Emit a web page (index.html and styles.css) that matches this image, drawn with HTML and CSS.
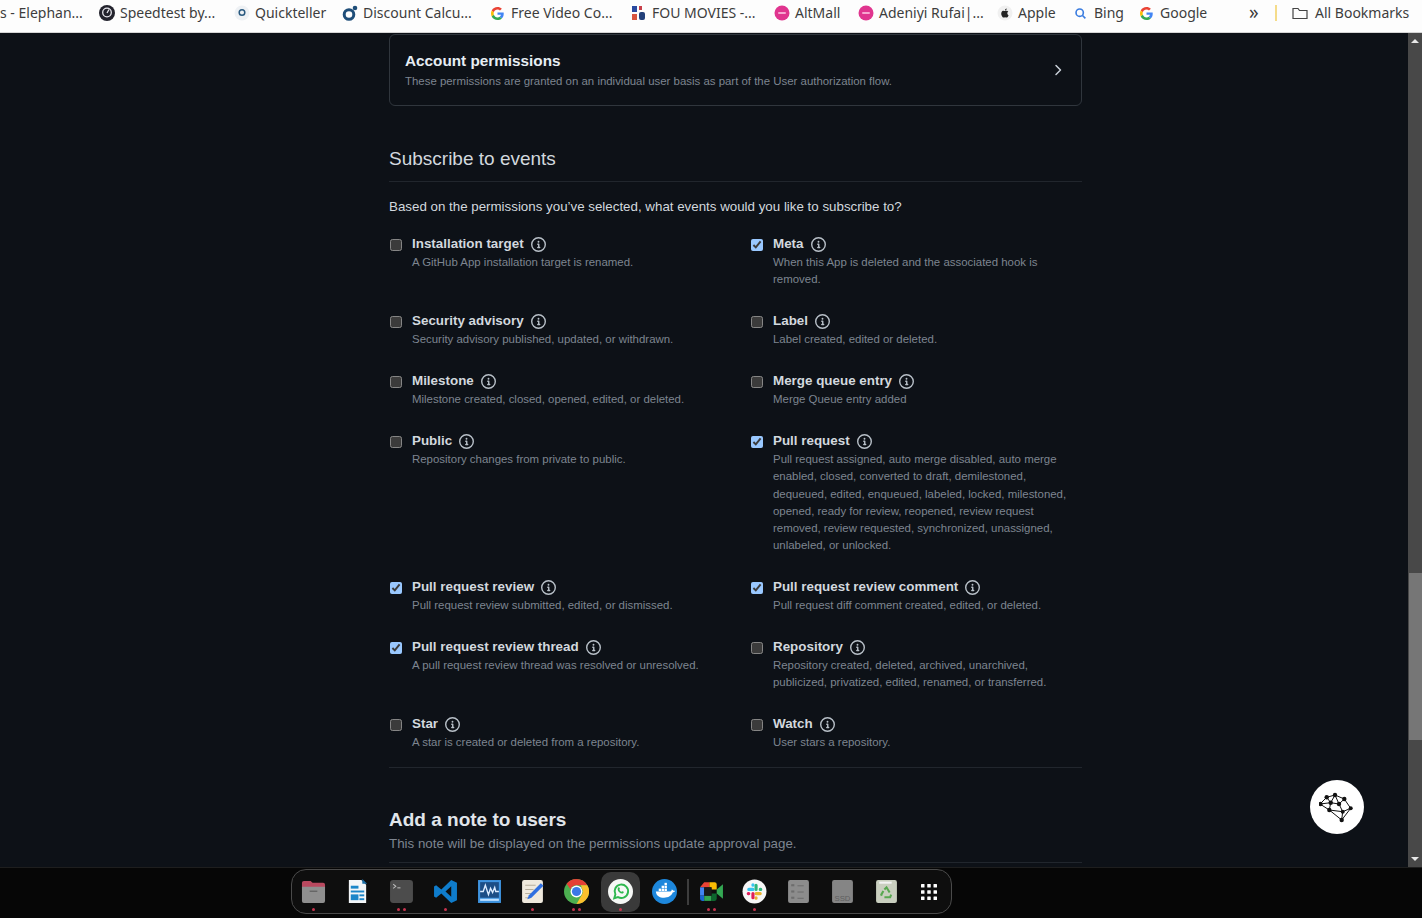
FILE: index.html
```html
<!DOCTYPE html>
<html lang="en">
<head>
<meta charset="utf-8">
<title>Subscribe to events</title>
<link rel="stylesheet" href="styles.css">
</head>
<body>
<svg class="defs" aria-hidden="true">
  <symbol id="info" viewBox="0 0 16 16"><path fill="currentColor" d="M0 8a8 8 0 1 1 16 0A8 8 0 0 1 0 8Zm8-6.5a6.5 6.5 0 1 0 0 13 6.5 6.5 0 0 0 0-13ZM6.5 7.75A.75.75 0 0 1 7.25 7h1a.75.75 0 0 1 .75.75v2.75h.25a.75.75 0 0 1 0 1.5h-2a.75.75 0 0 1 0-1.5h.25v-2h-.25a.75.75 0 0 1-.75-.75ZM8 6a1 1 0 1 1 0-2 1 1 0 0 1 0 2Z"/></symbol>
  <symbol id="g" viewBox="0 0 48 48"><path fill="#EA4335" d="M24 9.5c3.5 0 6.700 1.200 9.200 3.600l6.900-6.900C35.900 2.400 30.400 0 24 0 14.600 0 6.500 5.400 2.600 13.200l8 6.200C12.500 13.700 17.800 9.500 24 9.500z"/><path fill="#4285F4" d="M47 24.500c0-1.600-.1-3.100-.4-4.500H24v9h13c-.6 3-2.300 5.500-4.800 7.200l7.700 6C44.400 37.900 47 31.800 47 24.500z"/><path fill="#FBBC05" d="M10.600 28.600c-.5-1.400-.8-3-.8-4.600s.3-3.200.8-4.600l-8-6.200C.9 16.500 0 20.100 0 24s.9 7.500 2.600 10.800l8-6.200z"/><path fill="#34A853" d="M24 48c6.500 0 11.900-2.100 15.900-5.800l-7.700-6c-2.200 1.400-4.900 2.300-8.200 2.300-6.200 0-11.500-4.200-13.400-9.900l-8 6.200C6.500 42.600 14.600 48 24 48z"/></symbol>
  <symbol id="pink" viewBox="0 0 16 16"><circle cx="8" cy="8" r="7.500" fill="#e0358f"/><rect x="4" y="7" width="8" height="2" rx="1" fill="#f7a6d0"/></symbol>
</svg>

<div class="screen">
  <nav class="bookmarks">
    <a class="mark cut"><span class="mark-text">s - Elephan...</span></a>
    <a class="mark"><svg class="fav" viewBox="0 0 16 16"><circle cx="8" cy="8" r="8" fill="#23232d"/><circle cx="8" cy="7.500" r="4.300" fill="none" stroke="#e8e8ee" stroke-width="1.300"/><path d="M8 8 10 4.500" stroke="#e8e8ee" stroke-width="1.300"/></svg><span class="mark-text">Speedtest by...</span></a>
    <a class="mark"><svg class="fav" viewBox="0 0 16 16"><circle cx="8" cy="8" r="7.500" fill="#eef1f4"/><circle cx="8" cy="7.500" r="2.800" fill="none" stroke="#2a5a80" stroke-width="1.500"/></svg><span class="mark-text">Quickteller</span></a>
    <a class="mark"><svg class="fav" viewBox="0 0 16 16"><circle cx="7" cy="9.500" r="4.800" fill="none" stroke="#1f4e79" stroke-width="3"/><circle cx="13" cy="3" r="2.300" fill="#1f4e79"/></svg><span class="mark-text">Discount Calcu...</span></a>
    <a class="mark"><svg class="fav small" viewBox="0 0 16 16"><use href="#g"/></svg><span class="mark-text">Free Video Co...</span></a>
    <a class="mark"><svg class="fav" viewBox="0 0 16 16"><rect x="1" y="1" width="5" height="6" fill="#2a4aa0"/><rect x="8" y="1" width="3" height="4" fill="#c8404a"/><rect x="1" y="9" width="5" height="6" fill="#d8553f"/><rect x="8" y="7" width="6" height="8" rx="2" fill="#23407a"/></svg><span class="mark-text">FOU MOVIES -...</span></a>
    <a class="mark"><svg class="fav" viewBox="0 0 16 16"><use href="#pink"/></svg><span class="mark-text">AltMall</span></a>
    <a class="mark"><svg class="fav" viewBox="0 0 16 16"><use href="#pink"/></svg><span class="mark-text">Adeniyi Rufai|...</span></a>
    <a class="mark"><svg class="fav" viewBox="0 0 16 16"><circle cx="8" cy="8" r="7.500" fill="#f0f0f0"/><path fill="#222" d="M10.300 8.300c0-1.100.9-1.600 1-1.700-.5-.8-1.300-.9-1.600-.9-.7-.1-1.300.4-1.700.4s-.9-.4-1.500-.4c-.8 0-1.500.5-1.900 1.200-.8 1.400-.2 3.500.6 4.600.4.600.8 1.200 1.400 1.100.6 0 .8-.4 1.500-.4s.9.400 1.500.4 1-.6 1.400-1.100c.4-.6.600-1.200.6-1.200s-1.300-.5-1.300-2zM9.200 5c.3-.4.500-.9.500-1.400-.5 0-1 .3-1.300.7-.3.300-.5.800-.5 1.300.5 0 1-.2 1.300-.6z"/></svg><span class="mark-text">Apple</span></a>
    <a class="mark"><svg class="fav small" viewBox="0 0 16 16"><circle cx="7" cy="7" r="4.500" fill="none" stroke="#3b7de0" stroke-width="2"/><path d="M10.500 10.500 14 14" stroke="#3b7de0" stroke-width="2"/></svg><span class="mark-text">Bing</span></a>
    <a class="mark"><svg class="fav small" viewBox="0 0 16 16"><use href="#g"/></svg><span class="mark-text">Google</span></a>
    <span class="chev-more">»</span>
    <span class="mark-sep"></span>
    <a class="mark"><svg class="fav folder" viewBox="0 0 16 16"><path fill="none" stroke="#444" stroke-width="1.200" d="M1 3.500h5l1.500 2H15v8H1z"/></svg><span class="mark-text">All Bookmarks</span></a>
  </nav>

  <div class="viewport">
    <main class="page">
      <section class="perm-box">
        <div>
          <h3 class="perm-title">Account permissions</h3>
          <p class="perm-note">These permissions are granted on an individual user basis as part of the User authorization flow.</p>
        </div>
        <svg class="perm-chev" viewBox="0 0 16 16"><path fill="none" stroke="currentColor" stroke-width="1.500" stroke-linecap="round" stroke-linejoin="round" d="M6 3.500 10.500 8 6 12.500"/></svg>
      </section>

      <h2 class="section-head">Subscribe to events</h2>
      <p class="lead">Based on the permissions you’ve selected, what events would you like to subscribe to?</p>

      <div class="events">
        <div class="event"><input type="checkbox"><div><div class="event-name">Installation target <svg class="info"><use href="#info"/></svg></div><p class="event-note">A GitHub App installation target is renamed.</p></div></div>
        <div class="event"><input type="checkbox" checked><div><div class="event-name">Meta <svg class="info"><use href="#info"/></svg></div><p class="event-note">When this App is deleted and the associated hook is removed.</p></div></div>
        <div class="event"><input type="checkbox"><div><div class="event-name">Security advisory <svg class="info"><use href="#info"/></svg></div><p class="event-note">Security advisory published, updated, or withdrawn.</p></div></div>
        <div class="event"><input type="checkbox"><div><div class="event-name">Label <svg class="info"><use href="#info"/></svg></div><p class="event-note">Label created, edited or deleted.</p></div></div>
        <div class="event"><input type="checkbox"><div><div class="event-name">Milestone <svg class="info"><use href="#info"/></svg></div><p class="event-note">Milestone created, closed, opened, edited, or deleted.</p></div></div>
        <div class="event"><input type="checkbox"><div><div class="event-name">Merge queue entry <svg class="info"><use href="#info"/></svg></div><p class="event-note">Merge Queue entry added</p></div></div>
        <div class="event"><input type="checkbox"><div><div class="event-name">Public <svg class="info"><use href="#info"/></svg></div><p class="event-note">Repository changes from private to public.</p></div></div>
        <div class="event"><input type="checkbox" checked><div><div class="event-name">Pull request <svg class="info"><use href="#info"/></svg></div><p class="event-note">Pull request assigned, auto merge disabled, auto merge enabled, closed, converted to draft, demilestoned, dequeued, edited, enqueued, labeled, locked, milestoned, opened, ready for review, reopened, review request removed, review requested, synchronized, unassigned, unlabeled, or unlocked.</p></div></div>
        <div class="event"><input type="checkbox" checked><div><div class="event-name">Pull request review <svg class="info"><use href="#info"/></svg></div><p class="event-note">Pull request review submitted, edited, or dismissed.</p></div></div>
        <div class="event"><input type="checkbox" checked><div><div class="event-name">Pull request review comment <svg class="info"><use href="#info"/></svg></div><p class="event-note">Pull request diff comment created, edited, or deleted.</p></div></div>
        <div class="event"><input type="checkbox" checked><div><div class="event-name">Pull request review thread <svg class="info"><use href="#info"/></svg></div><p class="event-note">A pull request review thread was resolved or unresolved.</p></div></div>
        <div class="event"><input type="checkbox"><div><div class="event-name">Repository <svg class="info"><use href="#info"/></svg></div><p class="event-note">Repository created, deleted, archived, unarchived, publicized, privatized, edited, renamed, or transferred.</p></div></div>
        <div class="event"><input type="checkbox"><div><div class="event-name">Star <svg class="info"><use href="#info"/></svg></div><p class="event-note">A star is created or deleted from a repository.</p></div></div>
        <div class="event"><input type="checkbox"><div><div class="event-name">Watch <svg class="info"><use href="#info"/></svg></div><p class="event-note">User stars a repository.</p></div></div>
      </div>

      <h2 class="note-head">Add a note to users</h2>
      <p class="note-sub">This note will be displayed on the permissions update approval page.</p>
    </main>

    <div class="scrollbar">
      <span class="arrow up"></span>
      <span class="track"><span class="thumb"></span></span>
      <span class="arrow down"></span>
    </div>

    <button class="assist" aria-label="Assistant">
      <svg viewBox="0 0 36 36" width="36" height="36"><path fill="none" stroke="#111" stroke-width="1" d="M1 15 7.700 8.300 16 6 25.300 10 31.700 19.300 22.700 31 10.300 21 1 15ZM7.700 8.300 11.700 13.700 16 6 20 15 25.300 10M1 15 11.700 13.700 20 15 23.700 22.700 31.700 19.300M11.700 13.700 10.300 21 23.700 22.700 22.700 31"/><g fill="#111"><circle cx="1.500" cy="15" r="2.200"/><circle cx="7.700" cy="8.300" r="2.200"/><circle cx="16" cy="6" r="2.200"/><circle cx="25.300" cy="10" r="2.200"/><circle cx="31.700" cy="19.300" r="2"/><circle cx="23.700" cy="22.700" r="2"/><circle cx="22.700" cy="31" r="2.200"/><circle cx="10.300" cy="21" r="2.200"/><circle cx="11.700" cy="13.700" r="2.200"/><circle cx="20" cy="15" r="2.200"/></g></svg>
    </button>
  </div>

  <footer class="taskbar">
    <div class="dock">
      <div class="app"><svg viewBox="0 0 26 24"><path fill="#b9495f" d="M1 3a2 2 0 0 1 2-2h7l2 2h11a2 2 0 0 1 2 2v3H1z"/><path fill="#8f8f8f" d="M1 7h24v15a2 2 0 0 1-2 2H3a2 2 0 0 1-2-2z"/><rect x="9" y="11" width="8" height="1.500" fill="#666"/></svg><i class="dots"><b></b></i></div>
      <div class="app"><svg viewBox="0 0 24 26"><path fill="#f3f6f8" d="M3 1h13l5 5v19H3z"/><path fill="#1b6fa8" d="M17 0l5 5h-5z"/><rect x="5" y="12" width="14" height="2" fill="#1b86c9"/><rect x="5" y="16" width="8" height="6" fill="#1b86c9"/><rect x="14" y="16" width="5" height="2" fill="#1b86c9"/><rect x="14" y="20" width="5" height="2" fill="#1b86c9"/><rect x="5" y="7" width="8" height="3" fill="#1b86c9"/></svg></div>
      <div class="app"><svg viewBox="0 0 24 24"><rect x="1" y="1" width="22" height="22" rx="3" fill="#4c4c4c"/><path d="M4 5l2.500 2L4 9" fill="none" stroke="#bbb" stroke-width="1"/><rect x="8" y="8" width="3" height="1" fill="#bbb"/></svg><i class="dots"><b></b><b></b></i></div>
      <div class="app"><svg viewBox="0 0 24 24"><path fill="#0f7ccb" d="M17.500 1 23 3.500v17L17.500 23 8 14l-5 4-2-1.200v-9.600L3 6l5 4zM17.500 7 12 12l5.500 5z"/></svg><i class="dots"><b></b></i></div>
      <div class="app"><svg viewBox="0 0 24 24"><rect x="1" y="1" width="22" height="22" fill="#3f94e0"/><rect x="3" y="3" width="18" height="15" fill="#1c4e86"/><path d="M3 12h3l2-6 3 9 2-6 2 4 2-5 1 4h3" fill="none" stroke="#dcecff" stroke-width="1.300"/><rect x="3" y="19" width="18" height="2" fill="#bfe0ff"/></svg></div>
      <div class="app"><svg viewBox="0 0 24 24"><rect x="2" y="1" width="20" height="22" rx="2" fill="#efe9dd"/><path d="M5 6h10M5 10h8M5 14h6M5 18h5" stroke="#b5ad9c" stroke-width="1"/><path d="M20 4l2.500 2.500L11 18l-4 1.500L8.500 15.500z" fill="#2f6fe0"/></svg><i class="dots"><b></b></i></div>
      <div class="app"><svg viewBox="0 0 24 24"><circle cx="12" cy="12" r="12" fill="#4caf50"/><path fill="#e53f35" d="M12 0a12 12 0 0 1 10.400 6H12a6 6 0 0 0-5.700 4L2.500 4.600A12 12 0 0 1 12 0z"/><path fill="#fbc02d" d="M22.400 6A12 12 0 0 1 12 24l5.200-9A6 6 0 0 0 17.200 9 6 6 0 0 0 16 6z"/><circle cx="12" cy="12" r="5.700" fill="#fff"/><circle cx="12" cy="12" r="4.400" fill="#3b78e7"/></svg><i class="dots"><b></b><b></b></i></div>
      <div class="app active"><svg viewBox="0 0 26 26"><circle cx="13" cy="13" r="13" fill="#f6f8f6"/><path fill="none" stroke="#2fb84f" stroke-width="2" d="M6.500 20l1.200-4a7 7 0 1 1 2.700 2.800z"/><path fill="#2fb84f" d="M10.500 9c.8-.8 1.400-.3 1.800.8.200.6-.5 1-.4 1.300.3.900 1.200 1.800 2.100 2.100.4.100.7-.6 1.200-.4 1.100.4 1.600 1 .8 1.800-1 1-2.800.6-4.300-.8-1.500-1.400-2.200-3.600-1.200-4.800z"/></svg><i class="dots"><b></b></i></div>
      <div class="app"><svg viewBox="0 0 26 26"><circle cx="13" cy="13" r="13" fill="#1d87dc"/><path fill="#fff" d="M4 13h15c1 0 1.500-1 1.500-2 1 .2 1.500.7 1.800 1.300.8-.1 1.400 0 1.700.3-.5 1-1.300 1.400-2.500 1.500-1.200 3.500-4.500 5.400-9 5.400-4.500 0-8-1.700-8.500-6.500z"/><rect x="7" y="10" width="2.500" height="2.500" fill="#fff"/><rect x="10" y="10" width="2.500" height="2.500" fill="#fff"/><rect x="13" y="10" width="2.500" height="2.500" fill="#fff"/><rect x="10" y="7" width="2.500" height="2.500" fill="#fff"/><rect x="13" y="7" width="2.500" height="2.500" fill="#fff"/><rect x="13" y="4" width="2.500" height="2.500" fill="#fff"/></svg></div>
      <span class="dock-sep"></span>
      <div class="app"><svg viewBox="0 0 24 24"><path fill="#ea4335" d="M5 3h5v5H1z"/><path fill="#4285f4" d="M1 8h4v8H1z"/><path fill="#1967d2" d="M1 16h4v5H3a2 2 0 0 1-2-2z"/><path fill="#34a853" d="M5 16h7v5H5z"/><path fill="#fbbc04" d="M10 3h5a2 2 0 0 1 2 2v5h-5V8h-2z"/><path fill="#0d652d" d="M12 14h5v5a2 2 0 0 1-2 2h-3z"/><path fill="#34a853" d="M17 10l6-5v14l-6-5z"/><path fill="#1a1a1a" d="M5 8h7v8H5z"/></svg><i class="dots"><b></b><b></b></i></div>
      <div class="app"><svg viewBox="0 0 24 24"><circle cx="12" cy="12" r="11.500" fill="#f7f7f7"/><g fill="none" stroke-width="3" stroke-linecap="round"><path stroke="#36c5f0" d="M6.500 10h4M10.500 5.500v.5"/><path stroke="#2eb67d" d="M13.500 10v-4M18 10h-.5"/><path stroke="#ecb22e" d="M17.500 14h-4M13.500 18.500v-.5"/><path stroke="#e01e5a" d="M10.500 14v4M6 14h.5"/></g></svg><i class="dots"><b></b></i></div>
      <div class="app"><svg viewBox="0 0 22 24"><rect x="1" y="1" width="20" height="22" rx="2" fill="#8c8c8c"/><g fill="#6d6d6d"><rect x="4" y="5" width="3" height="2"/><rect x="4" y="11" width="3" height="2"/><rect x="4" y="17" width="3" height="2"/><rect x="10" y="6" width="6" height="1"/><rect x="10" y="12" width="6" height="1"/><rect x="10" y="18" width="6" height="1"/></g></svg></div>
      <div class="app"><svg viewBox="0 0 22 24"><rect x="1" y="1" width="20" height="22" rx="2" fill="#858585"/><text x="11" y="21" class="ssd">SSD</text></svg></div>
      <div class="app"><svg viewBox="0 0 22 24"><rect x="1" y="1" width="20" height="22" rx="2" fill="#c9cfbf"/><rect x="4" y="2.500" width="12" height="2" fill="#f3f3f3"/><path fill="none" stroke="#57a84f" stroke-width="2" d="M9 10l2-2 3 5M15.500 15l-1 2.500H9M6.500 16l-.5-1 2-3.500"/></svg></div>
      <div class="app last"><svg class="grid-icon" viewBox="0 0 16 16"><g fill="#fff"><rect x="0" y="0" width="3.500" height="3.500" rx=".5"/><rect x="6.250" y="0" width="3.500" height="3.500" rx=".5"/><rect x="12.500" y="0" width="3.500" height="3.500" rx=".5"/><rect x="0" y="6.250" width="3.500" height="3.500" rx=".5"/><rect x="6.250" y="6.250" width="3.500" height="3.500" rx=".5"/><rect x="12.500" y="6.250" width="3.500" height="3.500" rx=".5"/><rect x="0" y="12.500" width="3.500" height="3.500" rx=".5"/><rect x="6.250" y="12.500" width="3.500" height="3.500" rx=".5"/><rect x="12.500" y="12.500" width="3.500" height="3.500" rx=".5"/></g></svg></div>
    </div>
  </footer>
</div>
</body>
</html>
```
FILE: styles.css
```css
* { box-sizing: border-box; }
html, body { margin: 0; height: 100%; overflow: hidden; }
body { font-family: "Liberation Sans", Arial, sans-serif; background: #000; color-scheme: dark; }
.defs { display: none; }

.screen { display: flex; flex-direction: column; height: 918px; width: 1422px; }

/* bookmarks bar */
.bookmarks {
  flex: 0 0 33px;
  display: grid;
  grid-template-columns: 99px 135px 108px 149px 140px 143px 84px 139px 77px 66px 107px 28px 17px 130px;
  align-items: center;
  padding-bottom: 6px;
  background: #fdfdfd;
  border-bottom: 1px solid #d5d5d5;
  font-family: "Noto Sans", sans-serif;
  font-size: 14px;
  color: #3d3d3d;
  white-space: nowrap;
  overflow: hidden;
}
.mark { display: flex; align-items: center; gap: 5px; min-width: 0; }
.mark-text { margin-bottom: 2px; }
.fav { width: 16px; height: 16px; flex: none; }
.fav.small { width: 13px; height: 13px; margin-right: 2px; }
.fav.folder { margin-right: 2px; }
.chev-more { font-size: 19px; line-height: 22px; padding-left: 2px; margin-bottom: 3px; }
.mark-sep { width: 2px; height: 16px; background: #f5dc8a; }

/* page */
.viewport { flex: 1; position: relative; display: flex; min-height: 0; background: #0d1117; }
.page { flex: 1; min-width: 0; padding: 1px 326px 0 389px; overflow: hidden; }

.perm-box {
  height: 72px;
  border: 1px solid #30363d;
  border-radius: 6px;
  padding: 16px 15px;
  display: flex;
  align-items: center;
  justify-content: space-between;
}
.perm-title { margin: 0; font-size: 15.300px; line-height: 20px; font-weight: 700; color: #e6edf3; }
.perm-note { margin: 2px 0 0; font-size: 11.430px; line-height: 17px; color: #7d8590; }
.perm-chev { width: 16px; height: 16px; color: #c9d1d9; }

.section-head {
  margin: 39px 0 0;
  padding-bottom: 8px;
  font-size: 19px;
  line-height: 28px;
  font-weight: 400;
  color: #d2d8de;
  border-bottom: 1px solid #21262d;
}
.lead { margin: 15px 0 0; font-size: 13.340px; line-height: 19px; color: #d2d8de; }

.events {
  margin-top: 18px;
  display: grid;
  grid-template-columns: 361px 332px;
  border-bottom: 1px solid #21262d;
}
.event { display: flex; gap: 10px; padding-bottom: 22.800px; }
.event:nth-last-child(-n+2) { padding-bottom: 15px; }
.event input { margin: 5px 0 0 1px; width: 12px; height: 12px; flex: none; }
.event-name { font-size: 13.400px; line-height: 20px; font-weight: 700; color: #d2d8de; display: flex; align-items: center; gap: 7px; }
.info { width: 15px; height: 15px; color: #b8c0c8; }
.event-note { margin: 0; font-size: 11.450px; line-height: 17.200px; color: #7d8590; }

.note-head { margin: 38px 0 0; font-size: 19px; line-height: 28px; font-weight: 700; color: #e0e5ea; }
.note-sub { margin: 0; padding-bottom: 9px; font-size: 13.340px; line-height: 19px; color: #7d8590; border-bottom: 1px solid #21262d; }

/* scrollbar */
.scrollbar { flex: 0 0 14px; display: flex; flex-direction: column; background: #484848; }
.arrow { flex: 0 0 16px; display: flex; align-items: center; justify-content: center; }
.arrow::before { content: ""; border-left: 4px solid transparent; border-right: 4px solid transparent; }
.arrow.up::before { border-bottom: 4px solid #e8e8e8; }
.arrow.down::before { border-top: 4px solid #e8e8e8; }
.track { flex: 1; padding-top: 524px; }
.thumb { display: block; height: 167px; margin-left: 1px; background: #767676; }

.assist {
  position: absolute;
  left: 1310px;
  top: 747px;
  width: 54px;
  height: 54px;
  border-radius: 50%;
  border: 0;
  padding: 0;
  background: #fff;
  display: flex;
  align-items: center;
  justify-content: center;
}

/* dock */
.taskbar { flex: 0 0 51px; background: #060606; border-top: 1px solid #1e1e1e; padding: 1px 0 0 291px; }
.dock {
  width: 661px;
  height: 45px;
  border: 1px solid #4a4a4a;
  border-radius: 15px;
  background: #0e0e0e;
  display: flex;
  align-items: center;
}
.app { position: relative; flex: 0 0 43.800px; height: 40px; display: flex; align-items: center; justify-content: center; }
.app svg { width: 25px; height: 25px; }
.app svg.grid-icon { width: 16px; height: 16px; }
.app.active { flex-basis: 39.800px; margin: 0 2px; background: #3a3a3a; border-radius: 10px; }
.app.last { margin-left: -1px; }
.dock-sep { flex: 0 0 2px; height: 26px; margin-left: 1px; background: #3d3d3d; }
.dots { position: absolute; left: 0; right: 0; bottom: 1px; display: flex; justify-content: center; gap: 3px; }
.dots b { width: 3px; height: 3px; border-radius: 50%; background: #c8344f; }
.ssd { font: 7.500px "Liberation Sans", sans-serif; fill: #5f5f5f; text-anchor: middle; }
```
